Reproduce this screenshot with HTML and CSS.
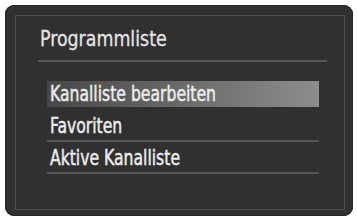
FILE: index.html
```html
<!DOCTYPE html>
<html lang="de">
<head>
    <meta charset="UTF-8">
    <meta name="viewport" content="width=device-width, initial-scale=1.0">
    <title>Programmliste</title>
    <link rel="stylesheet" href="styles.css">
</head>
<body>
    <div class="panel">
        <div class="frame">
            <h1 class="title"><span class="text">Programmliste</span></h1>
            <ul class="menu">
                <li class="item active"><span class="label"><span class="text">Kanalliste bearbeiten</span></span></li>
                <li class="item"><span class="label"><span class="text">Favoriten</span></span></li>
                <li class="item"><span class="label"><span class="text">Aktive Kanalliste</span></span></li>
            </ul>
        </div>
    </div>
</body>
</html>
```

FILE: styles.css
```css
* {
    margin: 0;
    padding: 0;
    box-sizing: border-box;
}

body {
    background-color: #fff;
    font-family: "DejaVu Sans Condensed", "DejaVu Sans", sans-serif;
    font-stretch: condensed;
    color: #ececec;
}

.panel {
    width: 348px;
    height: 211px;
    margin: 5px 0 0 5px;
    padding: 10px 8px 6px 10px;
    background-color: #303030;
    border-radius: 9px;
    box-shadow: inset 0 0 0 1px #262626;
}

.frame {
    height: 100%;
    border: 1px solid #4c4c4c;
    padding: 0 17px 0 22px;
}

/* schmale Schrift wie auf dem TV-Menue */
.text {
    display: inline-block;
    white-space: nowrap;
    transform-origin: left center;
    -webkit-text-stroke: 0.5px currentColor;
}

.title {
    font-size: 22px;
    font-weight: normal;
    line-height: 26px;
    padding: 10px 0 8px 2px;
    border-bottom: 2px solid #575757;
    color: #e4e4e4;
}

.title .text {
    transform: scaleX(0.88);
    -webkit-text-stroke: 0.3px currentColor;
}

.menu {
    list-style: none;
    margin: 16px 8px 0 9px;
}

.item {
    padding: 3px 0 1px;
    border-bottom: 2px solid #555;
}

.item.active {
    border-bottom-color: transparent;
}

.label {
    display: block;
    height: 26px;
    font-size: 22px;
    line-height: 26px;
    padding-left: 3px;
}

.label .text {
    transform: scaleX(0.79);
}

.active .label {
    background: linear-gradient(to right, #474747, #8d8d8d);
}
```
